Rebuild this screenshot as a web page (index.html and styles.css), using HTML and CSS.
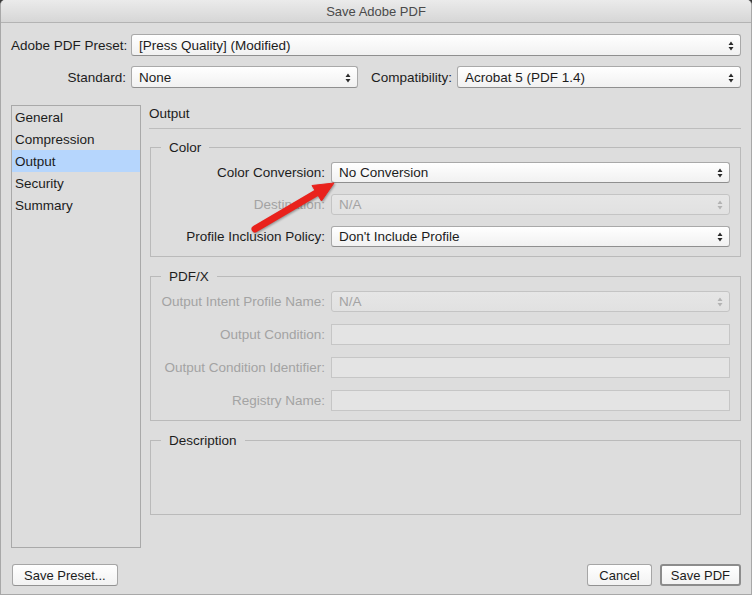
FILE: index.html
```html
<!DOCTYPE html>
<html lang="en">
<head>
    <meta charset="UTF-8">
    <title>Save Adobe PDF</title>
    <link rel="stylesheet" href="styles.css">
</head>
<body>
    <div class="window">
        <div class="titlebar">Save Adobe PDF</div>

        <div class="content">
            <div class="top-grid">
                <label class="lbl">Adobe PDF Preset:</label>
                <div class="select wide">
                    <span>[Press Quality] (Modified)</span>
                    <svg class="updown" viewBox="0 0 6 10"><path d="M0.5 4 L3 0.5 L5.5 4 Z M0.5 6 L3 9.5 L5.5 6 Z"/></svg>
                </div>

                <label class="lbl">Standard:</label>
                <div class="select">
                    <span>None</span>
                    <svg class="updown" viewBox="0 0 6 10"><path d="M0.5 4 L3 0.5 L5.5 4 Z M0.5 6 L3 9.5 L5.5 6 Z"/></svg>
                </div>
                <label class="lbl compat">Compatibility:</label>
                <div class="select">
                    <span>Acrobat 5 (PDF 1.4)</span>
                    <svg class="updown" viewBox="0 0 6 10"><path d="M0.5 4 L3 0.5 L5.5 4 Z M0.5 6 L3 9.5 L5.5 6 Z"/></svg>
                </div>
            </div>

            <div class="main">
                <ul class="sidebar">
                    <li>General</li>
                    <li>Compression</li>
                    <li class="active">Output</li>
                    <li>Security</li>
                    <li>Summary</li>
                </ul>

                <div class="panel">
                    <div class="panel-title">Output</div>

                    <fieldset class="group">
                        <legend>Color</legend>
                        <div class="form-grid">
                            <label class="lbl">Color Conversion:</label>
                            <div class="select">
                                <span>No Conversion</span>
                                <svg class="updown" viewBox="0 0 6 10"><path d="M0.5 4 L3 0.5 L5.5 4 Z M0.5 6 L3 9.5 L5.5 6 Z"/></svg>
                            </div>

                            <label class="lbl disabled">Destination:</label>
                            <div class="select disabled">
                                <span>N/A</span>
                                <svg class="updown" viewBox="0 0 6 10"><path d="M0.5 4 L3 0.5 L5.5 4 Z M0.5 6 L3 9.5 L5.5 6 Z"/></svg>
                            </div>

                            <label class="lbl">Profile Inclusion Policy:</label>
                            <div class="select">
                                <span>Don't Include Profile</span>
                                <svg class="updown" viewBox="0 0 6 10"><path d="M0.5 4 L3 0.5 L5.5 4 Z M0.5 6 L3 9.5 L5.5 6 Z"/></svg>
                            </div>
                        </div>
                    </fieldset>

                    <fieldset class="group">
                        <legend>PDF/X</legend>
                        <div class="form-grid loose">
                            <label class="lbl disabled">Output Intent Profile Name:</label>
                            <div class="select disabled">
                                <span>N/A</span>
                                <svg class="updown" viewBox="0 0 6 10"><path d="M0.5 4 L3 0.5 L5.5 4 Z M0.5 6 L3 9.5 L5.5 6 Z"/></svg>
                            </div>

                            <label class="lbl disabled">Output Condition:</label>
                            <div class="field"></div>

                            <label class="lbl disabled">Output Condition Identifier:</label>
                            <div class="field"></div>

                            <label class="lbl disabled">Registry Name:</label>
                            <div class="field"></div>
                        </div>
                    </fieldset>

                    <fieldset class="group">
                        <legend>Description</legend>
                        <div class="description"></div>
                    </fieldset>
                </div>
            </div>

            <div class="footer">
                <button class="btn">Save Preset...</button>
                <div class="footer-right">
                    <button class="btn">Cancel</button>
                    <button class="btn btn-default">Save PDF</button>
                </div>
            </div>
        </div>

        <!-- red pointer drawn over the dialog -->
        <svg class="annotation" viewBox="0 0 752 595">
            <g class="arrow">
                <line x1="254" y1="229" x2="317" y2="192" />
                <polygon points="333,183 311,185.5 320.5,201" />
            </g>
        </svg>
    </div>
</body>
</html>
```

FILE: styles.css
```css
* {
    box-sizing: border-box;
}
body {
    margin: 0;
    background-color: #3a3a3a;
    font-family: "Liberation Sans", Arial, Helvetica, sans-serif;
    font-size: 13.5px;
    line-height: 16px;
    color: #1c1c1c;
}
.window {
    position: relative;
    width: 752px;
    height: 595px;
    background-color: #dddddd;
    border: 1px solid #a8a8a8;
    border-top: none;
    border-radius: 5px 5px 0 0;
    overflow: hidden;
}
.titlebar {
    height: 23px;
    line-height: 23px;
    text-align: center;
    font-size: 13px;
    color: #4a4a4a;
    background: linear-gradient(to bottom, #ebebeb, #d6d6d6);
    border-bottom: 1px solid #b3b3b3;
}
.content {
    padding: 11px 10px 0 10px;
}

/* top preset rows */
.top-grid {
    display: grid;
    grid-template-columns: 115px 227px auto 1fr;
    column-gap: 5px;
    row-gap: 10px;
    align-items: center;
}
.top-grid .select {
    height: 22px;
}
.top-grid .wide {
    grid-column: 2 / -1;
}
.lbl {
    text-align: right;
    white-space: nowrap;
    padding-top: 1px;
}
.lbl.disabled {
    color: #a3a3a3;
}
.compat {
    margin-left: 8px;
}

/* popup buttons */
.select {
    display: flex;
    align-items: center;
    justify-content: space-between;
    height: 21px;
    padding: 1px 6px 0 7px;
    background: linear-gradient(to bottom, #ffffff, #f1f1f1);
    border: 1px solid #a9a9a9;
    border-bottom-color: #8f8f8f;
    border-radius: 3px;
    white-space: nowrap;
}
.updown {
    width: 6px;
    height: 10px;
    fill: #2b2b2b;
    flex-shrink: 0;
}
.select.disabled {
    background: linear-gradient(to bottom, #e6e6e6, #e1e1e1);
    border-color: #c4c4c4;
    color: #a3a3a3;
}
.select.disabled .updown {
    fill: #b3b3b3;
}
.field {
    height: 21px;
    background-color: #e4e4e4;
    border: 1px solid #c6c6c6;
}

/* main area */
.main {
    display: flex;
    gap: 8px;
    margin-top: 17px;
}
.sidebar {
    list-style: none;
    margin: 0;
    padding: 0;
    width: 130px;
    height: 443px;
    border: 1px solid #a9a9a9;
}
.sidebar li {
    height: 22px;
    line-height: 23px;
    padding-left: 3px;
}
.sidebar li.active {
    background-color: #b6d6fd;
}
.panel {
    flex: 1;
}
.panel-title {
    padding: 1px 0 6px 0;
    border-bottom: 1px solid #bdbdbd;
}

.group {
    margin: 10px 0 0 1px;
    padding: 6px 10px 9px 10px;
    border: 1px solid #bababa;
    min-width: 0;
}
.group + .group {
    margin-top: 11px;
}
.group legend {
    padding: 1px 8px 0 8px;
    color: #1c1c1c;
}
.form-grid {
    display: grid;
    grid-template-columns: 164px 1fr;
    column-gap: 6px;
    row-gap: 11px;
    align-items: center;
}
.form-grid.loose {
    row-gap: 12px;
}
.description {
    height: 50px;
}

/* bottom buttons */
.footer {
    display: flex;
    justify-content: space-between;
    margin-top: 16px;
    padding-left: 1px;
}
.footer-right {
    display: flex;
    gap: 8px;
}
.btn {
    height: 22px;
    padding: 0 11px;
    font-family: "Liberation Sans", Arial, Helvetica, sans-serif;
    font-size: 13px;
    color: #1c1c1c;
    background: linear-gradient(to bottom, #ffffff, #f2f2f2);
    border: 1px solid #a6a6a6;
    border-bottom-color: #929292;
    border-radius: 3px;
}
.btn-default {
    padding: 0 9px;
    border: 2px solid #8c8c8c;
}

/* annotation arrow */
.annotation {
    position: absolute;
    left: 0;
    top: 0;
    width: 752px;
    height: 595px;
    pointer-events: none;
}
.arrow {
    filter: drop-shadow(1px 1px 1px rgba(0, 0, 0, 0.35));
}
.arrow line {
    stroke: #e9221c;
    stroke-width: 7;
    stroke-linecap: round;
}
.arrow polygon {
    fill: #e9221c;
    stroke: #e9221c;
    stroke-width: 1;
    stroke-linejoin: round;
}
```
